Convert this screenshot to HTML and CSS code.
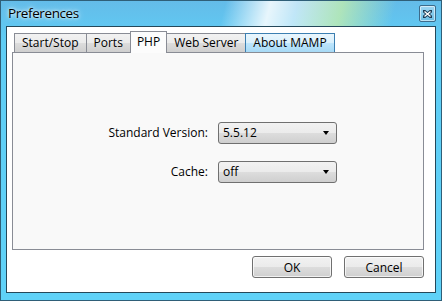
FILE: index.html
```html
<!DOCTYPE html>
<html lang="en">
<head>
  <meta charset="UTF-8">
  <title>Preferences</title>
  <link rel="stylesheet" href="styles.css">
</head>
<body>
  <div class="window">
    <div class="titlebar">
      <div class="title">Preferences</div>
      <div class="close">
        <svg width="9" height="8" viewBox="0 0 9 8">
          <path d="M1 1 L8 7 M8 1 L1 7" stroke="#1d3d57" stroke-width="3.2" stroke-linecap="square"/>
          <path d="M1.5 1.5 L7.5 6.5 M7.5 1.5 L1.5 6.5" stroke="#fff" stroke-width="1.4"/>
        </svg>
      </div>
    </div>

    <div class="client">
      <div class="tabs">
        <div class="tab">Start/Stop</div>
        <div class="tab">Ports</div>
        <div class="tab active">PHP</div>
        <div class="tab">Web Server</div>
        <div class="tab hover">About MAMP</div>
      </div>

      <div class="panel">
        <div class="form">
          <label>Standard Version:</label>
          <div class="select">5.5.12<span class="arrow"></span></div>
          <label>Cache:</label>
          <div class="select">off<span class="arrow"></span></div>
        </div>
      </div>

      <div class="buttons">
        <button>OK</button>
        <button>Cancel</button>
      </div>
    </div>
  </div>
</body>
</html>
```

FILE: styles.css
```css
body {
  margin: 0;
  font-family: 'Open Sans', 'Noto Sans', sans-serif;
  font-size: 12px;
  color: #000;
}

.window {
  width: 442px;
  height: 301px;
  box-sizing: border-box;
  display: flex;
  flex-direction: column;
  border: 1px solid #2f5f78;
  background:
    linear-gradient(104deg, transparent 50%, rgba(255, 255, 255, 0.85) 60%, rgba(255, 255, 255, 0.6) 66%, rgba(200, 240, 170, 0.75) 76%, transparent 88%) top / 100% 40px no-repeat,
    linear-gradient(180deg, #64bce9 0, #5fcdf5 40px, #5fd2f8 100%);
}

.titlebar {
  height: 25px;
  display: flex;
  align-items: flex-start;
  justify-content: space-between;
  padding: 0 5px 0 7px;
}

.title {
  font-size: 13.5px;
  letter-spacing: -0.4px;
  margin-top: 3px;
  text-shadow: 0 0 6px rgba(255, 255, 255, 0.9), 0 0 3px rgba(255, 255, 255, 0.9);
}

.close {
  width: 15px;
  height: 15px;
  margin-top: 4px;
  border: 1px solid #3d6b8a;
  border-radius: 2px;
  box-shadow: inset 0 0 0 1px rgba(255, 255, 255, 0.55);
  background: linear-gradient(180deg, #9fd6f2, #6cbfe6);
  display: flex;
  align-items: center;
  justify-content: center;
}

.client {
  flex: 1;
  margin: 0 5px 7px 5px;
  border: 1px solid #24485a;
  background: #fff;
  display: flex;
  flex-direction: column;
  padding: 4px 11px 0 5px;
}

.tabs {
  display: flex;
  align-items: flex-end;
  padding-left: 2px;
  height: 21px;
  position: relative;
  z-index: 1;
}

.tab {
  height: 18px;
  line-height: 18px;
  padding: 0 7px;
  border: 1px solid #898c95;
  border-bottom: none;
  margin-right: -1px;
  background: linear-gradient(180deg, #f2f2f2 0, #ebebeb 50%, #dddddd 50%, #cfcfcf 100%);
}

.tab.active {
  height: 21px;
  line-height: 20px;
  padding: 0 6px;
  background: #fcfcfc;
  position: relative;
  z-index: 2;
  margin-bottom: -1px;
}

.tab.hover {
  border-color: #3c7fb1;
  background: linear-gradient(180deg, #eaf6fd 0, #d9f0fc 50%, #bee6fd 50%, #a7d9f5 100%);
}

.panel {
  height: 196px;
  border: 1px solid #898c95;
  background: #f9f9f9;
  display: flex;
  flex-direction: column;
  justify-content: center;
}

.form {
  display: grid;
  grid-template-columns: 110px 119px;
  column-gap: 10px;
  row-gap: 17px;
  align-items: center;
  margin-left: 85px;
  margin-top: 2px;
}

.form label {
  text-align: right;
}

.select {
  height: 20px;
  line-height: 19px;
  border: 1px solid #707070;
  border-radius: 3px;
  padding: 0 4px;
  position: relative;
  background: linear-gradient(180deg, #f2f2f2 0, #ebebeb 50%, #dddddd 50%, #cfcfcf 100%);
}

.arrow {
  position: absolute;
  right: 7px;
  top: 8px;
  border-left: 3.5px solid transparent;
  border-right: 3.5px solid transparent;
  border-top: 4px solid #000;
}

.buttons {
  display: flex;
  justify-content: flex-end;
  gap: 12px;
  margin-top: 6px;
}

.buttons button {
  width: 80px;
  height: 22px;
  font: inherit;
  color: #000;
  border: 1px solid #707070;
  border-radius: 3px;
  box-shadow: inset 0 0 0 1px rgba(255, 255, 255, 0.7);
  background: linear-gradient(180deg, #f2f2f2 0, #ebebeb 50%, #dddddd 50%, #cfcfcf 100%);
}
```
